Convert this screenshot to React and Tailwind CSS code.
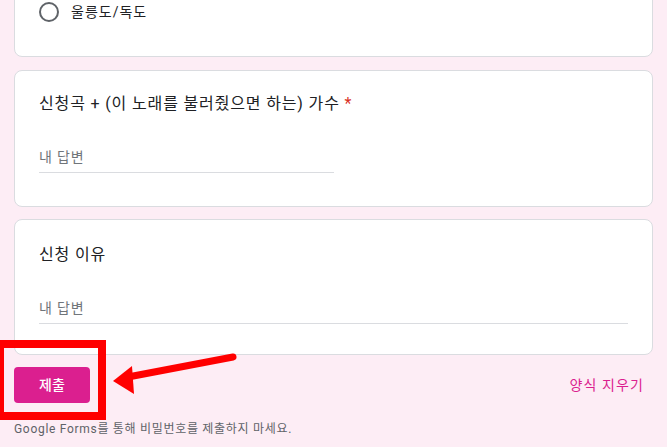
export default function App() {
  const kr = { fontFamily: 'Roboto, "Noto Sans CJK KR", sans-serif' };
  return (
    <div className="relative w-[667px] h-[447px] overflow-hidden bg-[#fdedf5]" style={kr}>
      <div className="px-[14px] flex flex-col">
        {/* card 1 */}
        <div className="-mt-[24px] h-[81px] bg-white border border-[#dadce0] rounded-[8px] pt-[23px] px-[24px]">
          <div className="flex items-center h-[24px] gap-[12px]">
            <div className="w-[20px] h-[20px] rounded-full border-2 border-[#5f6368]" />
            <span className="text-[14px] tracking-[1px] text-[#202124]">울릉도/독도</span>
          </div>
        </div>
        {/* card 2 */}
        <div className="mt-[13px] bg-white border border-[#dadce0] rounded-[8px] pt-[21px] pb-[33px] px-[24px] flex flex-col">
          <div className="text-[16px] leading-[24px] tracking-[0.85px] text-[#202124]">
            신청곡 + (이 노래를 불러줬으면 하는) 가수 <span className="text-[#d93025]">*</span>
          </div>
          <div className="mt-[26px] w-[295px] h-[31px] border-b border-[#dadce0] flex items-center text-[14px] tracking-[0.8px] text-[#70757a]">
            내 답변
          </div>
        </div>
        {/* card 3 */}
        <div className="mt-[12px] bg-white border border-[#dadce0] rounded-[8px] pt-[23px] pb-[30px] px-[24px] flex flex-col">
          <div className="text-[16px] leading-[24px] tracking-[0.85px] text-[#202124]">신청 이유</div>
          <div className="mt-[26px] h-[31px] border-b border-[#dadce0] flex items-center text-[14px] tracking-[0.8px] text-[#70757a]">
            내 답변
          </div>
        </div>
        {/* buttons */}
        <div className="mt-[12px] flex items-center justify-between">
          <div className="w-[76px] h-[36px] rounded-[4px] bg-[#db1f8f] text-white text-[14px] font-medium flex items-center justify-center">
            제출
          </div>
          <div className="mr-[9px] text-[14px] tracking-[1.1px] text-[#db1f8f]">양식 지우기</div>
        </div>
        <div className="mt-[18px] text-[12px] leading-[16px] tracking-[0.7px] text-[#5f6368]">
          Google Forms를 통해 비밀번호를 제출하지 마세요.
        </div>
      </div>
      {/* annotation overlay */}
      <div className="absolute left-[-4px] top-[340px] w-[110px] h-[80px] border-[8px] border-[#ff0000]" />
      <svg className="absolute left-0 top-0" width="667" height="447">
        <line x1="233" y1="357" x2="128" y2="377" stroke="#ff0000" strokeWidth="7" strokeLinecap="round" />
        <polygon points="113,381 132,366 134,394" fill="#ff0000" />
      </svg>
    </div>
  );
}
